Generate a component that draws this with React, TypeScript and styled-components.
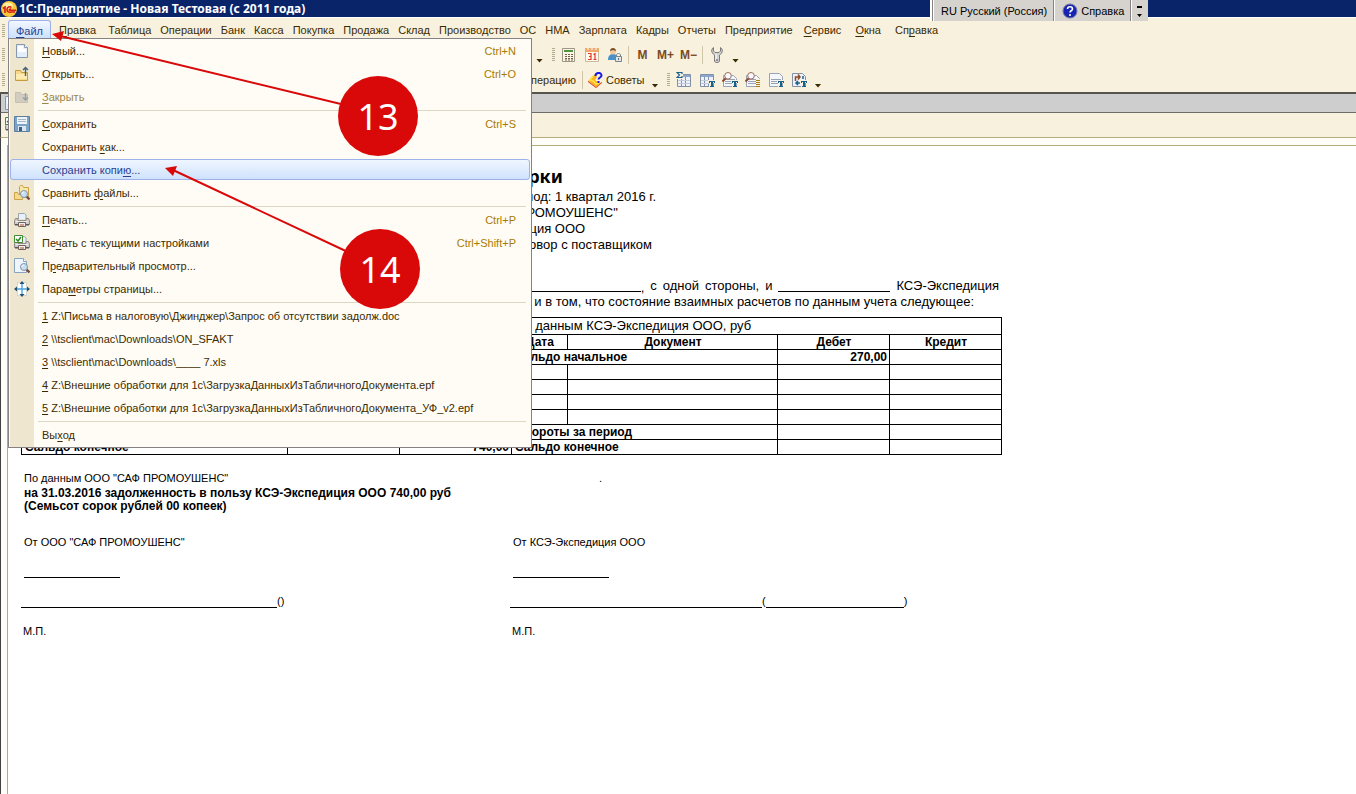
import React from "react";
import styled, { createGlobalStyle, css } from "styled-components";

const Global = createGlobalStyle`
  * { box-sizing: border-box; }
  html, body { margin: 0; padding: 0; }
  body { background: #fff; font: 11px/14px "Liberation Sans", Arial, sans-serif; color: #3c2b00; }
  button { font: inherit; color: inherit; background: none; border: 0; padding: 0; margin: 0; }
  u { text-underline-offset: 2px; text-decoration-thickness: 1px; }
`;

const Window = styled.div`
  position: relative;
  display: flex;
  flex-direction: column;
  min-height: 100vh;
  overflow: hidden;
`;

const TitleBar = styled.header`
  display: flex;
  align-items: center;
  gap: 2px;
  height: 17px;
  padding-left: 1px;
  background: #0a246a;
  color: #fff;
`;

const TitleText = styled.h1`
  margin: 0;
  font: bold 12px/16px "Noto Sans", sans-serif;
  white-space: nowrap;
`;

const LanguageBar = styled.div`
  position: absolute;
  top: 0;
  left: 930px;
  display: flex;
  height: 21px;
  border-left: 2px solid #fff;
  background: #d6d3ce;
  color: #000;
`;

const LanguageButton = styled.button<{ $narrow?: boolean }>`
  display: flex;
  align-items: center;
  justify-content: center;
  gap: 3px;
  padding: 0 ${(p) => (p.$narrow ? 4 : 6)}px 0 ${(p) => (p.$narrow ? 4 : 8)}px;
  border-left: 1px solid #848284;
  box-shadow: inset 1px 0 #fff;
  white-space: nowrap;
`;

const Chrome = styled.div`
  background: #f8f1de;
  border-top: 1px solid #fff;
  border-bottom: 2px solid #57544e;
`;

const MenuBar = styled.nav`
  display: flex;
  align-items: center;
  height: 24px;
  padding-left: 2px;
`;

const MenuBarButton = styled.button<{ $open?: boolean; $wide?: boolean }>`
  height: 20px;
  padding: 0 ${(p) => (p.$wide ? 7 : 4)}px 0 ${(p) => (p.$wide ? 7 : 5)}px;
  white-space: nowrap;
  ${(p) =>
    p.$open &&
    css`
      width: 43px;
      margin-left: 3px;
      margin-right: 1px;
      padding: 0;
      border: 1px solid #9db2ea;
      border-bottom: 0;
      border-radius: 3px 3px 0 0;
      background: linear-gradient(#f2f7ff, #c8ddfb);
      color: #2a4190;
    `}
`;

const Toolbar = styled.div`
  display: flex;
  align-items: center;
  height: 25px;
  padding-left: 2px;
`;

const CoveredTools = styled.div<{ $w: number }>`
  width: ${(p) => p.$w}px;
  padding-right: 4px;
  text-align: right;
  white-space: nowrap;
  flex: none;
`;

const ToolButton = styled.button<{ $memory?: boolean }>`
  display: flex;
  align-items: center;
  justify-content: center;
  gap: 2px;
  min-width: 23px;
  height: 22px;
  padding: 0 3px;
  white-space: nowrap;
  ${(p) =>
    p.$memory &&
    css`
      width: 23px;
      padding: 0;
      color: #7b4a24;
      font: bold 12px/14px "Liberation Sans", sans-serif;
    `}
`;

const Grip = styled.span`
  flex: none;
  width: 3px;
  height: 13px;
  background: repeating-linear-gradient(#b3ab8e 0 1px, transparent 1px 2px);
`;

const ToolGrip = styled(Grip)`
  margin: 0 2px 0 4px;
`;

const Divider = styled.span`
  width: 1px;
  height: 18px;
  margin: 0 2px;
  background: #cfc7a8;
`;

const Caret = styled.button`
  width: 7px;
  height: 4px;
  margin: 12px 5px 0 4px;
  background: #3c2b00;
  clip-path: polygon(0 0, 100% 0, 50% 100%);
`;

const WindowTabs = styled.div`
  height: 19px;
  padding: 1px 0 0 2px;
  background: #cecece;
  border-left: 1px solid #404040;
  border-bottom: 1px solid #6b6b68;
`;

const FormBar = styled.div`
  height: 25px;
  padding: 4px 0 0 4px;
  background: #f8f1de;
  border-left: 1px solid #404040;
  border-bottom: 1px solid #b5ac7b;
`;

const DocumentFrame = styled.main`
  flex: 1;
  display: flex;
  flex-direction: column;
  padding: 7px 0 0 6px;
  border-left: 1px solid #404040;
  background: #fffdf8;
`;

const Sheet = styled.article`
  flex: 1;
  padding: 20px 0 0 13px;
  border-top: 1px solid #b5ac7b;
  border-left: 1px solid #b5ac7b;
  background: #fff;
  color: #000;
`;

const Act = styled.div`
  width: 981px;
`;

const ActHeading = styled.h2`
  margin: 0 0 2px;
  text-align: center;
  font: bold 18px/21px "Noto Sans", sans-serif;
`;

const ActLine = styled.p`
  margin: 0;
  text-align: center;
  font-size: 13px;
  line-height: 16px;
`;

const Statement = styled.p`
  display: flex;
  justify-content: flex-end;
  gap: 6px;
  height: 16px;
  margin: 0;
  padding-right: 3px;
  font-size: 13px;
  line-height: 16px;
  white-space: nowrap;
`;

const StatementTail = styled(Statement)`
  padding-right: 28px;
`;

const StatementGroup = styled.div`
  padding: 25px 0 7px;
`;

const Blank = styled.span<{ $w: number }>`
  display: inline-block;
  width: ${(p) => p.$w}px;
  height: 14px;
  border-bottom: 1px solid #000;
`;

const Ledger = styled.table`
  width: 981px;
  table-layout: fixed;
  border-collapse: collapse;
  font-weight: bold;
  font-size: 12px;
  line-height: 14px;

  td, th {
    height: 15px;
    padding: 0 2px 0 3px;
    border: 1px solid #000;
    text-align: left;
    white-space: nowrap;
  }
  thead tr:last-child th { text-align: center; }
  tr.caption th { font-weight: normal; font-size: 13px; line-height: 16px; height: 17px; }
`;

const Amount = styled.td`
  && { text-align: right; }
`;

const Balance = styled.section`
  padding: 16px 3px 0;
`;

const Plain = styled.p`
  display: grid;
  grid-template-columns: 575px 1fr;
  margin: 0 0 1px;
  line-height: 15px;
`;

const Strong = styled.p`
  margin: 0;
  font-size: 12px;
  font-weight: bold;
  line-height: 13px;
`;

const Signatures = styled.section`
  display: grid;
  grid-template-columns: 489px 1fr;
  padding-top: 22px;
`;

const Signature = styled.div`
  display: flex;
  flex-direction: column;
`;

const SignParty = styled.span`
  padding-left: 3px;
`;

const SignRule = styled.span`
  width: 96px;
  margin: 14px 0 0 3px;
  height: 15px;
  border-bottom: 1px solid #000;
`;

const SignName = styled.span`
  display: flex;
  padding-top: 16px;
`;

const Stamp = styled.span`
  padding: 16px 0 0 2px;
`;

const FileMenu = styled.div`
  position: absolute;
  top: 38px;
  left: 8px;
  width: 524px;
  padding: 0 1px 1px;
  border: 1px solid #848284;
  background: linear-gradient(90deg, #fffcf6 1px, #eee6cf 1px 25px, #fffcf6 25px);
`;

const FileItem = styled.button<{ $active?: boolean; $disabled?: boolean }>`
  display: flex;
  align-items: center;
  width: 100%;
  height: 23px;
  padding: 0 13px 0 3px;
  border: 1px solid transparent;
  text-align: left;
  white-space: nowrap;
  color: ${(p) => (p.$disabled ? "#9c8648" : "inherit")};
  ${(p) =>
    p.$active &&
    css`
      height: 21px;
      margin: 1px 0;
      border-color: #9db2ea;
      border-radius: 3px;
      background: linear-gradient(#f0f6ff, #cfe2fd);
      color: #2a4190;
    `}
`;

const ItemIcon = styled.span`
  width: 16px;
  height: 16px;
  margin-right: 12px;
`;

const Shortcut = styled.kbd`
  margin-left: auto;
  font: inherit;
  color: #a87b00;
`;

const MenuRule = styled.hr`
  height: 1px;
  margin: 2px 4px 1px 28px;
  border: 0;
  background: #dcd7c3;
`;

const Arrows = styled.svg`
  position: absolute;
  top: 0;
  left: 0;
  pointer-events: none;
`;

const StepBadge = styled.div<{ $x: number; $y: number }>`
  position: absolute;
  left: ${(p) => p.$x}px;
  top: ${(p) => p.$y}px;
  width: 80px;
  height: 80px;
  border-radius: 50%;
  background: #d90909;
  color: #fff;
  text-align: center;
  font: 36px/82px "Noto Sans", sans-serif;
`;

const Svg = ({ children }: { children: React.ReactNode }) => (
  <svg width={16} height={16} viewBox="0 0 16 16" display="block" aria-hidden="true">
    {children}
  </svg>
);

const PageIcon = () => (
  <Svg>
    <path d="M2.5 1.5h8l3 3v10h-11z" fill="#e3eefa" stroke="#8698ad" />
    <path d="M4 3h5v3h3v3H4z" fill="#fff" />
    <path d="M10.5 1.5v3h3" fill="#fff" stroke="#8698ad" />
  </Svg>
);
const OpenIcon = () => (
  <Svg>
    <path d="M1.500 14.500v-10h5l1 2h6v8z" fill="#f6d98a" stroke="#c79a3c" />
    <path d="M2 8h11v5H2z" fill="#fdebb0" />
    <path d="M11.500 10V1.500M9 4l2.500-2.500L14 4" fill="none" stroke="#3f617c" strokeWidth="1.400" />
  </Svg>
);
const CloseIcon = () => (
  <Svg>
    <path d="M1.500 13.500v-10h5l1 2h6v8z" fill="#d2cdc0" stroke="#c6c0b2" />
    <path d="M11.500 4v7M9 8.500l2.500 2.500L14 8.500" fill="none" stroke="#8fa0a8" strokeWidth="1.400" />
  </Svg>
);
const SaveIcon = () => (
  <Svg>
    <path d="M.5.5h15v15h-15z" fill="#7ba4c8" stroke="#5d7f9f" />
    <path d="M3 1h10v7H3z" fill="#edf3f8" />
    <path d="M4 3.500h8M4 5.500h8" stroke="#a5b6c6" />
    <path d="M4 10h8v5H4z" fill="#dce6ef" />
    <path d="M5 11h3v4H5z" fill="#3e5f80" />
  </Svg>
);
const Lens = () => (
  <>
    <path d="M12 11l3.500 3.500" stroke="#7a4a35" strokeWidth="2.400" />
    <circle cx="10" cy="9" r="3.500" fill="#c4def5" stroke="#8793a0" />
    <path d="M8 9c0-1.500 1-2 2-2" fill="none" stroke="#fff" />
  </>
);
const CompareIcon = () => (
  <Svg>
    <path d="M5.500 12V1.500l1-1h2l1 2h5V12z" fill="#fae7a8" stroke="#c9a24a" />
    <path d="M.5 14.500v-7h3l1 2h4v5z" fill="#f6d98a" stroke="#c9a24a" />
    <Lens />
  </Svg>
);
const Printer = () => (
  <>
    <path d="M4.500 7V1.500h6l1.500 1.500v4" fill="#e6f1fb" stroke="#9aa6b4" />
    <path d="M1.500 6.500h2.500v2h8v-2h2.500l1 2v4h-15v-4z" fill="#cfcbc8" stroke="#908a88" />
    <path d="M2 9.500h12" stroke="#efecea" />
    <path d="M1 12h14v1.500H1z" fill="#5b5654" />
    <path d="M4.500 10.500h7v4h-7z" fill="#f3efec" stroke="#6b6462" />
    <path d="M6 13h4" stroke="#b44a2a" />
  </>
);
const PrintIcon = () => (
  <Svg>
    <Printer />
  </Svg>
);
const PrintCheckIcon = () => (
  <Svg>
    <Printer />
    <path d="M.5.5h8v7h-8z" fill="#fff" stroke="#438a35" />
    <path d="M2 4l2 2 3-4" fill="none" stroke="#2d8a24" strokeWidth="1.500" />
  </Svg>
);
const PreviewIcon = () => (
  <Svg>
    <path d="M.5.5h9l3 3v11H.5z" fill="#eef5fc" stroke="#8aa4c0" />
    <path d="M9.500.5v3h3" fill="#fff" stroke="#8aa4c0" />
    <Lens />
  </Svg>
);
const MoveIcon = () => (
  <Svg>
    <path d="M3.500 1.500h9v13h-9z" fill="#fff" stroke="#bbb" strokeDasharray="1 1" />
    <path d="M8 1v14M1 8h14" stroke="#4aa5de" strokeWidth="1.400" />
    <path d="M8 0l2.500 3h-5zM8 16l2.500-3h-5zM0 8l3-2.500v5zM16 8l-3-2.500v5z" fill="#24506f" />
  </Svg>
);
const LogoIcon = () => (
  <Svg>
    <circle cx="8" cy="8" r="8" fill="#f8c63a" />
    <ellipse cx="7" cy="5" rx="5" ry="3.500" fill="#fff0a0" />
    <path d="M2 7.500l2-1.500v6M10.500 6.500c-2-1.500-4.500-.5-4.500 2s2 3 4 2.500h4M10 8.200c-1.500-.7-2.300.8-1 1.100h6" fill="none" stroke="#d5231b" strokeWidth="1.600" />
  </Svg>
);
const CalcIcon = () => (
  <Svg>
    <path d="M1.500 1.500h12v13h-12z" fill="#fbf6e6" stroke="#9c9683" />
    <path d="M3 3h9v2H3z" fill="#4f9440" />
    <path d="M4 7.500h8M4 9.500h8M4 11.500h8M4 13h8" stroke="#74604a" strokeDasharray="2 1" />
  </Svg>
);
const CalendarIcon = () => (
  <Svg>
    <path d="M1.500 1.500h13v13h-13z" fill="#fff8f0" stroke="#c9b9a0" />
    <path d="M1 1h14v4H1z" fill="#f0a86d" />
    <path d="M3 2h2M7 2h2M11 2h2" stroke="#fff" />
    <path d="M4 6.500h3v6H4M5 9.500h2M9.500 7.500l1.500-1V13M9.500 12.500h3" fill="none" stroke="#e03a1e" strokeWidth="1.200" />
  </Svg>
);
const UserLockIcon = () => (
  <Svg>
    <path d="M1 13c0-4 2-6 5-6s5 2 5 6z" fill="#4a90c8" />
    <circle cx="6" cy="4.500" r="3" fill="#f4c79a" />
    <path d="M3 4c0-4 6-4 6 0L6 3z" fill="#7b4a24" />
    <path d="M9.500 10V8c0-2 4-2 4 0v2" fill="none" stroke="#78838c" />
    <path d="M8.500 9.500h6v5h-6z" fill="#dfe5e9" stroke="#78838c" />
    <path d="M11.500 11v2" stroke="#5d6870" />
  </Svg>
);
const WrenchIcon = () => (
  <Svg>
    <path
      d="M4.500.5C2 2 2 6 5.500 8v6c0 2 5 2 5 0V8C14 6 14 2 11.500.5V4L10 5.500H6L4.500 4z"
      fill="#d2d2d2"
      stroke="#7c7c7c"
    />
    <path d="M7 7v6" stroke="#fff" />
    <circle cx="8" cy="13" r="1" fill="#777" />
  </Svg>
);
const AdviceIcon = () => (
  <Svg>
    <path d="M0 9l7-7 2 3-2 3 4 3 3-1-6 5z" fill="#fbb51e" />
    <path d="M0 9l8 6 6-5v1l-6 5-8-6z" fill="#d8341c" />
    <path d="M5 4L2 8l3 1 3 3 3-1" fill="none" stroke="#ffe14a" strokeWidth="1.500" />
    <path d="M7.500 4c0-4 6-4 6-.5 0 2-3 2-3 4M10.500 9v2" fill="none" stroke="#1a1ae0" strokeWidth="2" />
  </Svg>
);
const HelpIcon = () => (
  <Svg>
    <circle cx="8" cy="8" r="7" fill="#1624b4" stroke="#73779a" />
    <path d="M5.500 6c0-3 5-3 5 0 0 2-2.500 1.500-2.500 3.500M8 11v2" fill="none" stroke="#fff" strokeWidth="1.600" />
  </Svg>
);

/* Blue "text" mark in the lower right corner, on a pale halo. */
const TextMark = () => (
  <>
    <path d="M9 8h7v3h-2v5h-4v-5H9z" fill="#f8f1de" />
    <path d="M10 9h6v2h-1v-1h-1v4h1v1h-4v-1h1v-4h-1v1h-1z" fill="#17618c" />
  </>
);
const Lines = ({ y = 3 }: { y?: number }) => (
  <>
    <path d={`M1.500 ${y}.5h10l3 3v${11 - y}h-13z`} fill="#f4f7fb" stroke="#9aa2b4" />
    <path d="M3 7.500h10M3 9.500h8M3 11.500h8" stroke="#9aa2b4" />
  </>
);
const Grid = () => (
  <>
    <path d="M1.500 2.500h13v12h-13z" fill="#eef2f8" stroke="#8390aa" />
    <path d="M2 3h12v2H2z" fill="#8ba6cf" />
    <path d="M5.500 5v9M9.500 5v9" stroke="#8390aa" />
    <path d="M2 8.500h12M2 11.500h12" stroke="#c3cad8" />
  </>
);
const SumTableIcon = () => (
  <Svg>
    <Grid />
    <path d="M0 0h7v7H0z" fill="#f8f1de" />
    <path d="M6 2V.5H1L3.500 3 1 5.500h5V4" fill="none" stroke="#17618c" strokeWidth="1.200" />
  </Svg>
);
const TableTextIcon = () => (
  <Svg>
    <Grid />
    <TextMark />
  </Svg>
);
const Magnifier = () => (
  <>
    <path d="M4 6L.5 9.500" stroke="#8a4a35" strokeWidth="2" />
    <circle cx="6" cy="3.800" r="3.300" fill="#f7fbff" stroke="#a06a5a" />
  </>
);
const SearchTextIcon = () => (
  <Svg>
    <Lines />
    <Magnifier />
    <TextMark />
  </Svg>
);
const SearchListIcon = () => (
  <Svg>
    <Lines />
    <Magnifier />
    <path d="M11 7h5v9h-5z" fill="#f8f1de" />
    <path d="M11 8.500h4M11 10.500h4M11 12.500h4M11 14.500h4" stroke="#a67c14" />
  </Svg>
);
const TextIcon = () => (
  <Svg>
    <Lines y={1} />
    <TextMark />
  </Svg>
);
const SwapTextIcon = () => (
  <Svg>
    <path d="M1.500 1.500h10l3 3v10h-13z" fill="#eef2f8" stroke="#8390aa" />
    <path d="M4.500 9V5h4M7 2.500L9 5 7 7.500" fill="none" stroke="#8a4a24" strokeWidth="1.500" />
    <path d="M12 4v3M9 11H5M7 9l-2 2 2 2" fill="none" stroke="#17618c" strokeWidth="1.500" />
    <TextMark />
  </Svg>
);

/* "~" marks the access key that follows it. */
const Label = ({ text }: { text: string }) => {
  const at = text.indexOf("~");
  if (at < 0) return <span>{text}</span>;
  return (
    <span>
      {text.slice(0, at)}
      <u>{text[at + 1]}</u>
      {text.slice(at + 2)}
    </span>
  );
};

const MENUS = [
  "~Правка", "Таблица", "Операции", "Банк", "Касса", "Покупка", "Продажа", "Склад",
  "Производство", "ОС", "НМА", "Зарплата", "Кадры", "Отчеты", "Предприятие",
  "~Сервис", "~Окна", "Сп~равка",
];

type Entry = { text: string; icon?: React.ReactNode; keys?: string; active?: boolean; disabled?: boolean };
const GROUPS: Entry[][] = [
  [
    { text: "~Новый...", icon: <PageIcon />, keys: "Ctrl+N" },
    { text: "~Открыть...", icon: <OpenIcon />, keys: "Ctrl+O" },
    { text: "~Закрыть", icon: <CloseIcon />, disabled: true },
  ],
  [
    { text: "~Сохранить", icon: <SaveIcon />, keys: "Ctrl+S" },
    { text: "Сохранить ~как..." },
    { text: "Сохранить копи~ю...", active: true },
    { text: "Сравнить ~файлы...", icon: <CompareIcon /> },
  ],
  [
    { text: "~Печать...", icon: <PrintIcon />, keys: "Ctrl+P" },
    { text: "Пе~чать с текущими настройками", icon: <PrintCheckIcon />, keys: "Ctrl+Shift+P" },
    { text: "П~редварительный просмотр...", icon: <PreviewIcon /> },
    { text: "Пара~метры страницы...", icon: <MoveIcon /> },
  ],
  [
    { text: "~1 Z:\\Письма в налоговую\\Джинджер\\Запрос об отсутствии задолж.doc" },
    { text: "~2 \\\\tsclient\\mac\\Downloads\\ON_SFAKT" },
    { text: "~3 \\\\tsclient\\mac\\Downloads\\____ 7.xls" },
    { text: "~4 Z:\\Внешние обработки для 1с\\ЗагрузкаДанныхИзТабличногоДокумента.epf" },
    { text: "~5 Z:\\Внешние обработки для 1с\\ЗагрузкаДанныхИзТабличногоДокумента_УФ_v2.epf" },
  ],
  [{ text: "Вы~ход" }],
];

const COLS = [56, 210, 112, 112, 56, 210, 112, 112];

export default function App() {
  return (
    <Window>
      <Global />
      <TitleBar>
        <LogoIcon />
        <TitleText>1С:Предприятие - Новая Тестовая (с 2011 года)</TitleText>
      </TitleBar>

      <Chrome>
        <MenuBar>
          <Grip />
          <MenuBarButton $open>
            <Label text="~Файл" />
          </MenuBarButton>
          {MENUS.map((m) => (
            <MenuBarButton key={m} $wide={m.includes("~")}>
              <Label text={m} />
            </MenuBarButton>
          ))}
        </MenuBar>
        <Toolbar>
          <Grip />
          <CoveredTools $w={527} />
          <Caret aria-label="Ещё" />
          <ToolGrip />
          <ToolButton aria-label="Калькулятор"><CalcIcon /></ToolButton>
          <ToolButton aria-label="Календарь"><CalendarIcon /></ToolButton>
          <ToolButton aria-label="Пользователи"><UserLockIcon /></ToolButton>
          <Divider />
          <ToolButton $memory>M</ToolButton>
          <ToolButton $memory>M+</ToolButton>
          <ToolButton $memory>M−</ToolButton>
          <Divider />
          <ToolButton aria-label="Настройка"><WrenchIcon /></ToolButton>
          <Caret aria-label="Ещё" />
        </Toolbar>
        <Toolbar>
          <Grip />
          <CoveredTools $w={575}>операцию</CoveredTools>
          <Divider />
          <ToolButton><AdviceIcon />Советы</ToolButton>
          <Caret aria-label="Ещё" />
          <ToolGrip />
          <ToolButton aria-label="Итоги"><SumTableIcon /></ToolButton>
          <ToolButton aria-label="Таблица"><TableTextIcon /></ToolButton>
          <ToolButton aria-label="Найти"><SearchTextIcon /></ToolButton>
          <ToolButton aria-label="Найти в списке"><SearchListIcon /></ToolButton>
          <ToolButton aria-label="Текст"><TextIcon /></ToolButton>
          <ToolButton aria-label="Заменить"><SwapTextIcon /></ToolButton>
          <Caret aria-label="Ещё" />
        </Toolbar>
      </Chrome>

      <WindowTabs><PageIcon /></WindowTabs>
      <FormBar><PrintCheckIcon /></FormBar>

      <DocumentFrame>
        <Sheet>
          <Act>
            <ActHeading>Акт сверки</ActHeading>
            <ActLine>взаимных расчетов за период: 1 квартал 2016 г.</ActLine>
            <ActLine>между ООО "САФ ПРОМОУШЕНС"</ActLine>
            <ActLine>и КСЭ-Экспедиция ООО</ActLine>
            <ActLine>по договору Основной договор с поставщиком</ActLine>

            <StatementGroup>
              <Statement>
                <span><Blank $w={150} />,</span>
                <span>с</span>
                <span>одной</span>
                <span>стороны,</span>
                <span>и</span>
                <Blank $w={112} />
                <span>КСЭ-Экспедиция</span>
              </Statement>
              <StatementTail>и в том, что состояние взаимных расчетов по данным учета следующее:</StatementTail>
            </StatementGroup>

            <Ledger>
              <colgroup>
                {COLS.map((w, i) => (
                  <col key={i} width={w} />
                ))}
              </colgroup>
              <thead>
                <tr className="caption">
                  <th colSpan={4} />
                  <th colSpan={4}>По данным КСЭ-Экспедиция ООО, руб</th>
                </tr>
                <tr>
                  <th colSpan={4} />
                  <th>Дата</th>
                  <th>Документ</th>
                  <th>Дебет</th>
                  <th>Кредит</th>
                </tr>
              </thead>
              <tbody>
                <tr>
                  <td colSpan={4} />
                  <td colSpan={2}>Сальдо начальное</td>
                  <Amount>270,00</Amount>
                  <td />
                </tr>
                {[0, 1, 2, 3].map((r) => (
                  <tr key={r}>
                    {COLS.map((_, i) => (
                      <td key={i} />
                    ))}
                  </tr>
                ))}
                <tr>
                  <td colSpan={2} />
                  <td />
                  <td />
                  <td colSpan={2}>Обороты за период</td>
                  <td />
                  <td />
                </tr>
                <tr>
                  <td colSpan={2}>Сальдо конечное</td>
                  <td />
                  <Amount>740,00</Amount>
                  <td colSpan={2}>Сальдо конечное</td>
                  <td />
                  <td />
                </tr>
              </tbody>
            </Ledger>

            <Balance>
              <Plain>
                <span>По данным ООО "САФ ПРОМОУШЕНС"</span>
                <span>.</span>
              </Plain>
              <Strong>на 31.03.2016 задолженность в пользу КСЭ-Экспедиция ООО 740,00 руб</Strong>
              <Strong>(Семьсот сорок рублей 00 копеек)</Strong>
            </Balance>

            <Signatures>
              <Signature>
                <SignParty>От ООО "САФ ПРОМОУШЕНС"</SignParty>
                <SignRule />
                <SignName><Blank $w={256} />()</SignName>
                <Stamp>М.П.</Stamp>
              </Signature>
              <Signature>
                <SignParty>От КСЭ-Экспедиция ООО</SignParty>
                <SignRule />
                <SignName><Blank $w={252} />(<Blank $w={138} />)</SignName>
                <Stamp>М.П.</Stamp>
              </Signature>
            </Signatures>
          </Act>
        </Sheet>
      </DocumentFrame>

      <LanguageBar>
        <LanguageButton>RU Русский (Россия)</LanguageButton>
        <LanguageButton><HelpIcon />Справка</LanguageButton>
        <LanguageButton $narrow aria-label="Параметры">
          <svg width="9" height="14" viewBox="0 0 9 14" aria-hidden="true">
            <path d="M2 2h5v2H2zM2 10h5L4.500 13z" fill="#000" />
          </svg>
        </LanguageButton>
      </LanguageBar>

      <FileMenu role="menu">
        {GROUPS.map((group, g) => (
          <React.Fragment key={g}>
            {g > 0 && <MenuRule />}
            {group.map((e) => (
              <FileItem key={e.text} role="menuitem" $active={e.active} $disabled={e.disabled}>
                <ItemIcon>{e.icon}</ItemIcon>
                <Label text={e.text} />
                {e.keys && <Shortcut>{e.keys}</Shortcut>}
              </FileItem>
            ))}
          </React.Fragment>
        ))}
      </FileMenu>

      <Arrows width="440" height="320" viewBox="0 0 440 320" aria-hidden="true">
        <path d="M60 36L345 105M173 170L350 253" stroke="#d90909" strokeWidth="2" />
        <path d="M52 34l12-3-3 10zM165 168l12-2-4 10z" fill="#d90909" />
      </Arrows>
      <StepBadge $x={338} $y={76}>13</StepBadge>
      <StepBadge $x={340} $y={229}>14</StepBadge>
    </Window>
  );
}
